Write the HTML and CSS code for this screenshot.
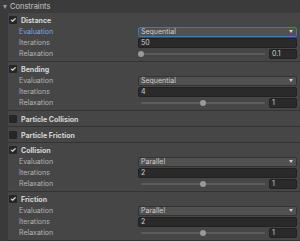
FILE: index.html
```html
<!DOCTYPE html>
<html lang="en">
	<head>
		<meta charset="UTF-8" />
		<title>Constraints</title>
		<link rel="stylesheet" href="styles.css">
	</head>
	<body>
		<div class="foldout"><span class="arrow"></span>Constraints</div>

		<div class="groups">
			<!-- Distance -->
			<div class="group">
				<div class="group-head"><span class="check">&#10003;</span>Distance</div>
				<div class="field">
					<div class="label focus">Evaluation</div>
					<div class="dropdown focus">Sequential<span class="caret"></span></div>
				</div>
				<div class="field">
					<div class="label">Iterations</div>
					<div class="input">50</div>
				</div>
				<div class="field">
					<div class="label">Relaxation</div>
					<div class="slider">
						<div class="track"><span class="knob" style="left: 0%"></span></div>
						<div class="input num">0.1</div>
					</div>
				</div>
			</div>

			<!-- Bending -->
			<div class="group">
				<div class="group-head"><span class="check">&#10003;</span>Bending</div>
				<div class="field">
					<div class="label">Evaluation</div>
					<div class="dropdown">Sequential<span class="caret"></span></div>
				</div>
				<div class="field">
					<div class="label">Iterations</div>
					<div class="input">4</div>
				</div>
				<div class="field">
					<div class="label">Relaxation</div>
					<div class="slider">
						<div class="track"><span class="knob" style="left: 50%"></span></div>
						<div class="input num">1</div>
					</div>
				</div>
			</div>

			<div class="group closed">
				<div class="group-head"><span class="check off"></span>Particle Collision</div>
			</div>

			<div class="group closed">
				<div class="group-head"><span class="check off"></span>Particle Friction</div>
			</div>

			<!-- Collision -->
			<div class="group">
				<div class="group-head"><span class="check">&#10003;</span>Collision</div>
				<div class="field">
					<div class="label">Evaluation</div>
					<div class="dropdown">Parallel<span class="caret"></span></div>
				</div>
				<div class="field">
					<div class="label">Iterations</div>
					<div class="input">2</div>
				</div>
				<div class="field">
					<div class="label">Relaxation</div>
					<div class="slider">
						<div class="track"><span class="knob" style="left: 50%"></span></div>
						<div class="input num">1</div>
					</div>
				</div>
			</div>

			<!-- Friction -->
			<div class="group">
				<div class="group-head"><span class="check">&#10003;</span>Friction</div>
				<div class="field">
					<div class="label">Evaluation</div>
					<div class="dropdown">Parallel<span class="caret"></span></div>
				</div>
				<div class="field">
					<div class="label">Iterations</div>
					<div class="input">2</div>
				</div>
				<div class="field">
					<div class="label">Relaxation</div>
					<div class="slider">
						<div class="track"><span class="knob" style="left: 50%"></span></div>
						<div class="input num">1</div>
					</div>
				</div>
			</div>
		</div>
	</body>
</html>
```

FILE: styles.css
```css
body {
	margin: 0;
	background-color: #3a3a3a;
	color: #c4c4c4;
	font-family: Inter, 'Noto Sans', sans-serif;
	font-size: 7px;
	height: 241px;
	overflow: hidden;
}

.foldout {
	display: flex;
	align-items: center;
	height: 13px;
	padding-left: 3px;
	color: #c8c8c8;
	font-size: 7.5px;
	background-color: #3b3b3b;
}

.arrow {
	width: 0;
	height: 0;
	border-left: 2.5px solid transparent;
	border-right: 2.5px solid transparent;
	border-top: 4px solid #9a9a9a;
	margin-right: 3px;
}

.groups {
	margin-left: 8px;
}

.group {
	background-color: #464646;
	border-bottom: 1px solid #333;
	padding: 1px 0 2px;
}

.group.closed {
	padding: 2px 0 1px;
}

.group-head {
	display: flex;
	align-items: center;
	height: 12px;
	padding-left: 1px;
	font-weight: bold;
	color: #d6d6d6;
}

.check {
	width: 8px;
	height: 8px;
	margin-right: 4px;
	border-radius: 1px;
	background-color: #262626;
	color: #e8e8e8;
	font-size: 7px;
	line-height: 8px;
	text-align: center;
}

.field {
	display: flex;
	align-items: center;
	height: 11px;
	padding: 0 3px 0 11px;
}

.label {
	width: 119px;
	flex-shrink: 0;
	color: #b4b4b4;
}

.label.focus {
	color: #7ca6e2;
}

.dropdown {
	flex: 1;
	display: flex;
	align-items: center;
	height: 10px;
	box-sizing: border-box;
	padding-left: 2px;
	background-color: #515151;
	border: 1px solid #333;
	border-radius: 2px;
	color: #cfcfcf;
}

.dropdown.focus {
	border-color: #3e78b8;
}

.caret {
	margin-left: auto;
	margin-right: 3px;
	width: 0;
	height: 0;
	border-left: 2px solid transparent;
	border-right: 2px solid transparent;
	border-top: 3px solid #d0d0d0;
}

.input {
	flex: 1;
	display: flex;
	align-items: center;
	height: 10px;
	box-sizing: border-box;
	padding-left: 2px;
	background-color: #2a2a2a;
	border: 1px solid #212121;
	border-radius: 2px;
	color: #d0d0d0;
}

.slider {
	flex: 1;
	display: flex;
	align-items: center;
}

.track {
	flex: 1;
	position: relative;
	height: 2px;
	margin: 0 4px 0 3px;
	background-color: #5c5c5c;
	border-radius: 1px;
}

.knob {
	position: absolute;
	top: -2px;
	width: 6px;
	height: 6px;
	margin-left: -3px;
	border-radius: 50%;
	background-color: #999;
}

.input.num {
	flex: none;
	width: 28px;
}
```
